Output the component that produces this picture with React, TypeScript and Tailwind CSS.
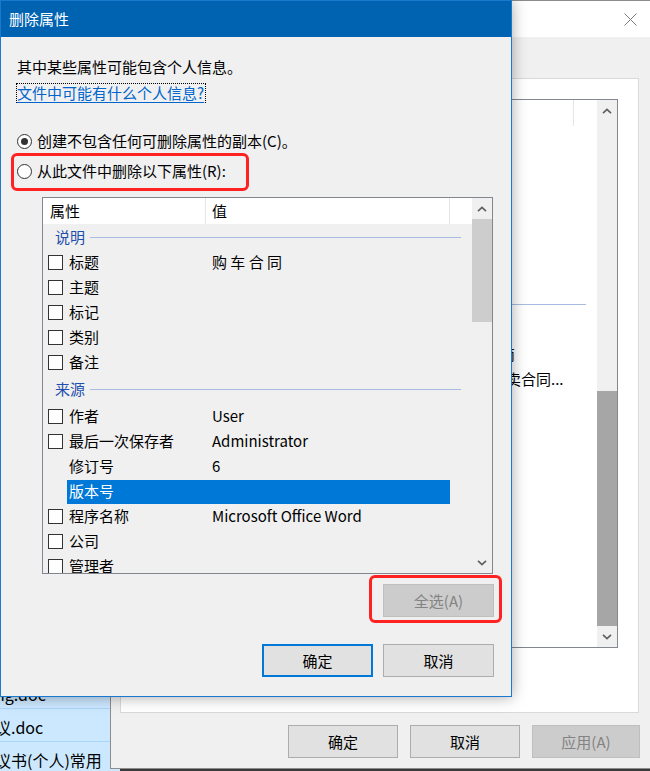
import React from 'react';

type Row = { name: string; value?: string; check?: boolean; selected?: boolean };

const groups: { title: string; h: string; rows: Row[] }[] = [
  {
    title: '说明',
    h: 'h-[26px]',
    rows: [
      { name: '标题', value: '购 车 合 同', check: true },
      { name: '主题', check: true },
      { name: '标记', check: true },
      { name: '类别', check: true },
      { name: '备注', check: true },
    ],
  },
  {
    title: '来源',
    h: 'h-[29px]',
    rows: [
      { name: '作者', value: 'User', check: true },
      { name: '最后一次保存者', value: 'Administrator', check: true },
      { name: '修订号', value: '6' },
      { name: '版本号', selected: true },
      { name: '程序名称', value: 'Microsoft Office Word', check: true },
      { name: '公司', check: true },
      { name: '管理者', check: true },
    ],
  },
];

function Chevron({ down = false }: { down?: boolean }) {
  return (
    <svg width="10" height="6" viewBox="0 0 10 6" className={down ? 'rotate-180' : ''}>
      <path d="M1 5.2 L5 1.4 L9 5.2" fill="none" stroke="#606060" strokeWidth="1.7" />
    </svg>
  );
}

function Checkbox() {
  return <span className="block h-[15px] w-[15px] border border-[#333333] bg-white" />;
}

function PropertyRow({ row }: { row: Row }) {
  return (
    <div className="flex h-[25px] shrink-0 items-center pl-[5px]">
      <span className="w-[15px] shrink-0">{row.check && <Checkbox />}</span>
      <div
        className={`ml-[4px] flex h-[24px] w-[383px] shrink-0 items-center pb-[2px] pl-[2px] ${
          row.selected ? 'bg-[#0078d7] text-white' : 'text-black'
        }`}
      >
        <span className="w-[143px] shrink-0 whitespace-nowrap">{row.name}</span>
        <span className="whitespace-nowrap">{row.value}</span>
      </div>
    </div>
  );
}

function GroupHeader({ title, h }: { title: string; h: string }) {
  return (
    <div className={`flex ${h} shrink-0 items-center pl-[12px] pr-[11px]`}>
      <span className="pb-[2px] text-[#1f4fae]">{title}</span>
      <span className="ml-[5px] h-px flex-1 bg-[#a9bbe0]" />
    </div>
  );
}

function WinButton({
  label,
  w = 'w-[111px]',
  variant = 'normal',
}: {
  label: string;
  w?: string;
  variant?: 'normal' | 'default' | 'disabled';
}) {
  const style =
    variant === 'default'
      ? 'border-2 border-[#0078d7] bg-[#e1e1e1] text-black'
      : variant === 'disabled'
        ? 'border border-[#bfbfbf] bg-[#cccccc] text-[#838383]'
        : 'border border-[#adadad] bg-[#e1e1e1] text-black';
  return (
    <div className={`flex h-[33px] ${w} items-center justify-center pb-[1px] ${style}`}>{label}</div>
  );
}

function Radio({ checked = false }: { checked?: boolean }) {
  return (
    <span className="flex h-[15px] w-[15px] shrink-0 items-center justify-center rounded-full border border-[#333333] bg-white">
      {checked && <span className="h-[7px] w-[7px] rounded-full bg-[#333333]" />}
    </span>
  );
}

export default function App() {
  return (
    <div className="relative h-[771px] w-[650px] overflow-hidden bg-[#3a3a3a] text-[15px] leading-none font-['Noto_Sans_CJK_SC','Microsoft_YaHei',sans-serif]">
      {/* Explorer file list behind */}
      <div className="absolute left-0 top-[676px] flex w-[120px] flex-col bg-[#cce8ff]">
        {['ng.doc', '议.doc', '议书(个人)常用'].map((t) => (
          <div key={t} className="flex h-[33px] items-center border-b border-[#a9d6fb] pt-[3px]">
            <span className="ml-[-5px] whitespace-nowrap text-[16px] text-black">{t}</span>
          </div>
        ))}
      </div>

      {/* Properties window behind */}
      <div className="absolute left-[110px] top-0 flex h-[769px] w-[540px] flex-col border-b border-l border-t border-[#8c8c8c] bg-[#f0f0f0]">
        <div className="flex h-[36px] shrink-0 items-center justify-end bg-white pr-[13px]">
          <svg width="13" height="13" viewBox="0 0 13 13">
            <path d="M0.5 0.5 L12.5 12.5 M12.5 0.5 L0.5 12.5" stroke="#7a7a7a" strokeWidth="1" />
          </svg>
        </div>
        <div className="ml-[9px] mr-[11px] mt-[41px] h-[635px] border border-[#d9d9d9] bg-white p-[20px]">
          <div className="flex h-[549px] border border-[#828790]">
            <div className="flex flex-1 flex-col overflow-hidden">
              <div className="flex h-[26px] shrink-0">
                <div className="w-[432px] border-r border-[#e5e5e5]" />
              </div>
              <div className="mt-[165px] flex h-[26px] items-center pr-[11px]">
                <span className="h-px flex-1 bg-[#a9bbe0]" />
              </div>
              <div className="h-[25px]" />
              <div className="flex h-[25px] items-center pb-[2px] pl-[358px]">
                <span>简</span>
              </div>
              <div className="flex h-[25px] items-center pb-[2px] pl-[349px]">
                <span className="whitespace-nowrap">买卖合同...</span>
              </div>
            </div>
            <div className="flex w-[20px] flex-col bg-[#f0f0f0]">
              <div className="flex h-[21px] items-center justify-center">
                <Chevron />
              </div>
              <div className="h-[270px]" />
              <div className="h-[235px] bg-[#a6a6a6]" />
              <div className="flex h-[21px] items-center justify-center">
                <Chevron down />
              </div>
            </div>
          </div>
        </div>
        <div className="mr-[10px] mt-[12px] flex justify-end gap-[12px]">
          <WinButton label="确定" w="w-[110px]" />
          <WinButton label="取消" w="w-[110px]" />
          <WinButton label="应用(A)" w="w-[108px]" variant="disabled" />
        </div>
      </div>

      {/* Remove properties dialog */}
      <div className="absolute left-0 top-0 flex h-[697px] w-[512px] flex-col border border-[#1a78cf] bg-[#f0f0f0] shadow-[0_0_14px_rgba(0,0,0,0.35)]">
        <div className="flex h-[36px] shrink-0 items-center bg-[#0063b1] pb-[2px] pl-[8px] text-white">删除属性</div>

        <div className="flex flex-col pl-[16px] pr-[17px]">
          <div className="mt-[21px] flex h-[20px] items-center pb-[3px]">其中某些属性可能包含个人信息。</div>
          <div className="ml-[-1px] mt-[5px] flex h-[20px] items-center self-start whitespace-nowrap border border-dotted border-black pb-[2px] pr-[1px] text-[#0066cc] underline underline-offset-[3px]">
            文件中可能有什么个人信息?
          </div>

          <div className="mt-[28px] flex h-[20px] items-center gap-[5px]">
            <Radio checked />
            <span className="pb-[2px]">创建不包含任何可删除属性的副本(C)。</span>
          </div>
          <div className="relative mt-[10px] flex h-[20px] items-center gap-[5px]">
            <Radio />
            <span className="pb-[2px]">从此文件中删除以下属性(R):</span>
            <span className="absolute left-[-6px] top-[-8px] h-[38px] w-[238px] rounded-[6px] border-[3px] border-[#ff2222]" />
          </div>

          <div className="ml-[25px] mt-[16px] flex h-[377px] w-[451px] border border-[#828790]">
            <div className="flex flex-1 flex-col overflow-hidden">
              <div className="flex h-[26px] shrink-0 bg-white">
                <div className="flex w-[163px] items-center border-r border-[#e5e5e5] pb-[2px] pl-[7px]">属性</div>
                <div className="flex w-[244px] items-center border-r border-[#e5e5e5] pb-[2px] pl-[6px]">值</div>
                <div className="flex-1" />
              </div>
              {groups.map((g) => (
                <React.Fragment key={g.title}>
                  <GroupHeader title={g.title} h={g.h} />
                  {g.rows.map((r) => (
                    <PropertyRow key={r.name} row={r} />
                  ))}
                </React.Fragment>
              ))}
            </div>
            <div className="flex w-[20px] flex-col bg-[#f0f0f0]">
              <div className="flex h-[21px] items-center justify-center">
                <Chevron />
              </div>
              <div className="h-[103px] bg-[#cdcdcd]" />
              <div className="flex-1" />
              <div className="flex h-[21px] items-center justify-center">
                <Chevron down />
              </div>
            </div>
          </div>

          <div className="mt-[10px] flex justify-end">
            <div className="relative">
              <WinButton label="全选(A)" variant="disabled" />
              <span className="absolute left-[-14px] top-[-9px] h-[48px] w-[133px] rounded-[6px] border-[3px] border-[#ff2222]" />
            </div>
          </div>

          <div className="mt-[27px] flex justify-end gap-[10px]">
            <WinButton label="确定" variant="default" />
            <WinButton label="取消" />
          </div>
        </div>
      </div>
    </div>
  );
}
